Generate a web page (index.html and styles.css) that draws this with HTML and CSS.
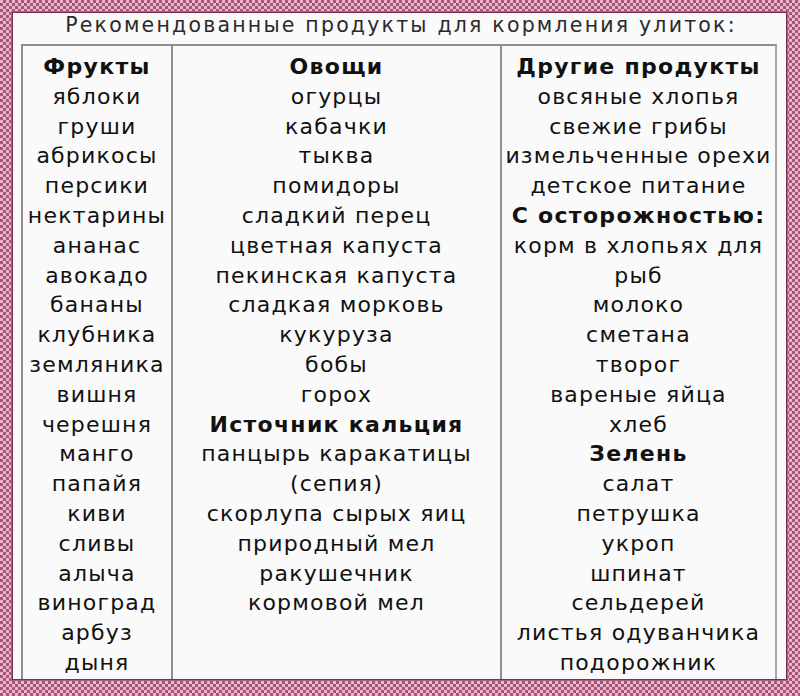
FILE: index.html
```html
<!DOCTYPE html>
<html lang="ru">
<head>
<meta charset="utf-8">
<link rel="stylesheet" href="styles.css">
</head>
<body>
<div class="frame">
  <div class="sheet">
    <div class="title">Рекомендованные продукты для кормления улиток:</div>
    <div class="table">
      <div class="col c1">
        <div class="h">Фрукты</div>
        <div>яблоки</div>
        <div>груши</div>
        <div>абрикосы</div>
        <div>персики</div>
        <div>нектарины</div>
        <div>ананас</div>
        <div>авокадо</div>
        <div>бананы</div>
        <div>клубника</div>
        <div>земляника</div>
        <div>вишня</div>
        <div>черешня</div>
        <div>манго</div>
        <div>папайя</div>
        <div>киви</div>
        <div>сливы</div>
        <div>алыча</div>
        <div>виноград</div>
        <div>арбуз</div>
        <div>дыня</div>
      </div>
      <div class="col c2">
        <div class="h">Овощи</div>
        <div>огурцы</div>
        <div>кабачки</div>
        <div>тыква</div>
        <div>помидоры</div>
        <div>сладкий перец</div>
        <div>цветная капуста</div>
        <div>пекинская капуста</div>
        <div>сладкая морковь</div>
        <div>кукуруза</div>
        <div>бобы</div>
        <div>горох</div>
        <div class="h">Источник кальция</div>
        <div>панцырь каракатицы</div>
        <div>(сепия)</div>
        <div>скорлупа сырых яиц</div>
        <div>природный мел</div>
        <div>ракушечник</div>
        <div>кормовой мел</div>
      </div>
      <div class="col c3">
        <div class="h">Другие продукты</div>
        <div>овсяные хлопья</div>
        <div>свежие грибы</div>
        <div>измельченные орехи</div>
        <div>детское питание</div>
        <div class="h">С осторожностью:</div>
        <div>корм в хлопьях для</div>
        <div>рыб</div>
        <div>молоко</div>
        <div>сметана</div>
        <div>творог</div>
        <div>вареные яйца</div>
        <div>хлеб</div>
        <div class="h">Зелень</div>
        <div>салат</div>
        <div>петрушка</div>
        <div>укроп</div>
        <div>шпинат</div>
        <div>сельдерей</div>
        <div>листья одуванчика</div>
        <div>подорожник</div>
      </div>
    </div>
  </div>
</div>
</body>
</html>
```
FILE: styles.css
```css
* { box-sizing: border-box; }
html, body { margin: 0; padding: 0; }
body { width: 800px; height: 696px; overflow: hidden; }
.frame {
  width: 800px;
  height: 696px;
  padding: 13px 14px 17px 13px;
  background-color: #e9aec4;
  background-image: repeating-conic-gradient(#a2587a 0 25%, #efb4c9 0 50%);
  background-size: 6px 6px;
}
.sheet {
  height: 100%;
  background: #fafafa;
  box-shadow: 0 0 0 1px #7a2f52, 0 0 0 2px #b0607f;
  padding: 0 9px 0 8px;
  overflow: hidden;
  font-family: "DejaVu Sans", Verdana, sans-serif;
  color: #111;
}
.title {
  height: 31px;
  font-size: 20.5px;
  line-height: 24px;
  letter-spacing: 2.2px;
  text-align: center;
  color: #2a2a2a;
  padding-left: 4px;
}
.table {
  display: grid;
  grid-template-columns: 150px 329px 1fr;
  border-top: 2px solid #8f8f8f;
  border-right: 2px solid #a8a8a8;
  height: 660px;
}
.col {
  border-left: 2px solid #8f8f8f;
  padding-top: 6px;
  text-align: center;
  font-size: 22px;
  line-height: 29.8px;
  letter-spacing: 1.2px;
  white-space: nowrap;
}
.h { font-weight: bold; letter-spacing: 1.3px; }
```
